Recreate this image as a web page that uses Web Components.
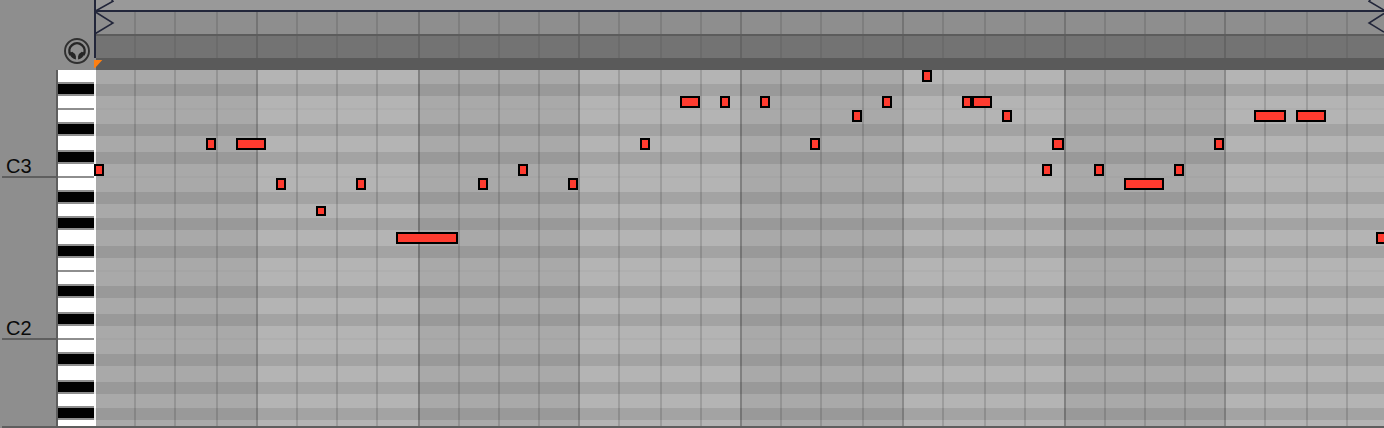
<!DOCTYPE html>
<html lang="en"><head><meta charset="utf-8"><title>Piano roll</title>
<style>body{margin:0;background:#8e8e8e;font-family:"Liberation Sans",Arial,sans-serif;overflow:hidden}</style></head>
<body><piano-roll></piano-roll>
<script>
const LINES=[134,174,216,256,296,336,376,418,458,498,538,578,618,660,700,740,780,820,862,902,942,984,1024,1064,1104,1144,1184,1224,1264,1306,1346];
const BARS=[256,418,578,740,902,1064,1224];
const BLACKS=[84,124,152,192,218,246,286,314,354,382,408];
const SEAMS=[108,176,270,338];
const NOTES=[[94,164,10],[206,138,10],[236,138,30],[276,178,10],[316,206,10,10],[356,178,10],[396,232,62],[478,178,10],[518,164,10],[568,178,10],[640,138,10],[680,96,20],[720,96,10],[760,96,10],[810,138,10],[852,110,10],[882,96,10],[922,70,10],[962,96,10],[972,96,20],[1002,110,10],[1042,164,10],[1052,138,12],[1094,164,10],[1124,178,40],[1174,164,10],[1214,138,10],[1254,110,32],[1296,110,30],[1376,232,12]];
const define=(name,render)=>customElements.define(name,class extends HTMLElement{
  connectedCallback(){if(!this.shadowRoot)this.attachShadow({mode:'open'}).innerHTML=render(this)}
});
const rect=(x,y,w,h,f)=>`<rect x="${x}" y="${y}" width="${w}" height="${h}" fill="${f}"/>`;
define('headphone-button',()=>`<style>:host{display:block;width:28px;height:28px}svg{display:block}</style>
<svg width="28" height="28" viewBox="0 0 28 28" fill="none"><circle cx="14" cy="14" r="12" stroke="#303030" stroke-width="1.9"/>
<path d="M7.6 18A7.6 7.6 0 1 1 20.4 18" stroke="#262626" stroke-width="2.5"/>
<path d="M6.2 16L9.2 14.8Q12.9 17 12.9 19.2V22.5Q8.2 21.8 6.2 16ZM21.8 16L18.8 14.8Q15.1 17 15.1 19.2V22.5Q19.8 21.8 21.8 16Z" fill="#262626"/></svg>`);
define('octave-label',()=>`<style>:host{display:block;box-sizing:border-box;margin-left:2px;padding-left:4px;height:24px;border-bottom:2px solid #5e5e5e;color:#0a0a0a;font-size:20px;line-height:24px}</style><slot></slot>`);
define('roll-keys',()=>{
  let s=rect(0,0,38,356,'#fff');
  SEAMS.forEach(y=>s+=rect(0,y-70,36,2,'#8e8e8e'));
  BLACKS.forEach(y=>s+=rect(0,y-72,36,14,'#8e8e8e')+rect(0,y-70,36,10,'#000')+rect(36,y-70,2,12,'#ececec'));
  return `<style>:host{display:block;width:38px;height:356px}svg{display:block}</style><svg width="38" height="356" shape-rendering="crispEdges">${s}</svg>`;
});
define('key-gutter',()=>`<style>:host{display:flex;width:96px;height:428px;flex-direction:column}
.top{height:70px;display:flex;justify-content:flex-end;align-items:flex-start;box-sizing:border-box;padding:37px 5px 0 0}
.body{display:flex;height:356px}.labels{display:flow-root;width:56px;height:356px}
octave-label.a{margin-top:84px}octave-label.b{margin-top:138px}
roll-keys{border-left:2px solid #5e5e5e}.foot{height:2px;margin-left:2px;background:#5e5e5e}</style>
<div class="top"><headphone-button></headphone-button></div>
<div class="body"><div class="labels"><octave-label class="a">C3</octave-label><octave-label class="b">C2</octave-label></div><roll-keys></roll-keys></div><div class="foot"></div>`);
define('time-ruler',()=>{
  let s=rect(96,0,1288,10,'#999')+rect(96,12,1288,22,'#8e8e8e')+rect(96,36,1288,22,'#737373')+rect(96,58,1288,12,'#5a5a5a');
  LINES.forEach(x=>{const b=BARS.includes(x);s+=rect(x,12,2,22,b?'#747474':'#7e7e7e')+rect(x,36,2,22,b?'#646464':'#6b6b6b')});
  s+=rect(96,34,1288,2,'#5c5c5c')+rect(94,10,1290,2,'#22263a')+rect(94,0,2,58,'#22263a');
  return `<style>:host{display:block;height:70px}svg{display:block;margin-left:-2px}</style><svg width="1290" height="70" viewBox="94 0 1290 70"><g shape-rendering="crispEdges">${s}</g>
<path d="M95.5 11L113 1.2L111 -1M95.5 12L113 23L95.5 33.5M1384 10L1369 1.2L1371 -1M1384 13.5L1369 23L1384 32" fill="none" stroke="#22263a" stroke-width="1.5"/><path d="M94 60H102.3L95 68H94Z" fill="#ff7f11"/></svg>`;
});
define('note-grid',()=>{
  let s=rect(96,70,1288,356,'#a9a9a9'),e=[96,...BARS,1384];
  for(let i=1;i<e.length-1;i+=2)s+=rect(e[i],70,e[i+1]-e[i],356,'#b4b4b4');
  BLACKS.forEach(y=>s+=rect(96,y,1288,12,'rgba(0,0,0,.094)'));
  SEAMS.forEach(y=>s+=rect(96,y,1288,2,'rgba(0,0,0,.025)'));
  LINES.forEach(x=>s+=rect(x,70,2,356,BARS.includes(x)?'rgba(0,0,0,.24)':'rgba(0,0,0,.13)'));
  s+=rect(94,426,1290,2,'#5e5e5e');
  NOTES.forEach(([x,y,w,h=12])=>s+=rect(x,y,w,h,'#000')+rect(x+2,y+2,w-4,h-4,'#ff3b2f'));
  return `<style>:host{display:block;height:358px}svg{display:block;margin-left:-2px}</style><svg width="1290" height="358" viewBox="94 70 1290 358" shape-rendering="crispEdges">${s}</svg>`;
});
define('piano-roll',()=>`<style>:host{display:grid;grid-template-columns:96px 1288px;width:1384px;height:428px;background:#8e8e8e}</style><key-gutter></key-gutter><main><time-ruler></time-ruler><note-grid></note-grid></main>`);
</script></body></html>
